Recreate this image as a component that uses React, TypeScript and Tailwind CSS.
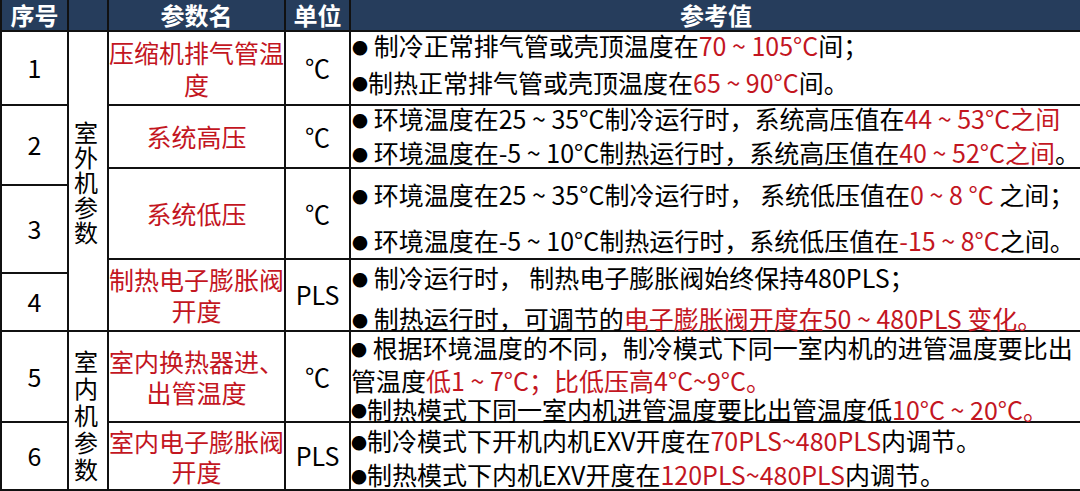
import React from "react";

type Seg = string | { r: string };

const font = { fontFamily: '"Noto Sans CJK SC", "Noto Sans", sans-serif' };

function Line({ parts, bullet, space }: { parts: Seg[]; bullet?: boolean; space?: boolean }) {
  return (
    <div className="whitespace-nowrap">
      {bullet && <span className="text-[16px] align-middle relative -top-[2px]">●</span>}
      {space && " "}
      {parts.map((p, i) =>
        typeof p === "string" ? (
          <span key={i}>{p}</span>
        ) : (
          <span key={i} className="text-[#c3161f]">
            {p.r}
          </span>
        )
      )}
    </div>
  );
}

function Head({ children }: { children?: React.ReactNode }) {
  return (
    <div className="bg-[#263d5c] text-white font-bold text-[24px] flex items-center justify-center leading-[30px]">
      {children}
    </div>
  );
}

function Cell({ children, className = "" }: { children?: React.ReactNode; className?: string }) {
  return <div className={`bg-white flex items-center justify-center ${className}`}>{children}</div>;
}

function Vertical({ text, lh }: { text: string; lh: string }) {
  return (
    <div className={`flex flex-col items-center text-[24px] ${lh}`}>
      {text.split("").map((c, i) => (
        <span key={i}>{c}</span>
      ))}
    </div>
  );
}

export default function App() {
  return (
    <div style={font} className="w-[1080px] h-[491px] bg-[#111] overflow-hidden text-black">
      <div className="grid h-full px-[2px] pb-[2px] gap-[2px] grid-cols-[65px_38px_175px_63px_1fr] grid-rows-[30px_72px_61px_15px_72px_12px_56px_89px_66px] text-[25px]">
        {/* header */}
        <Head>序号</Head>
        <Head />
        <Head>参数名</Head>
        <Head>单位</Head>
        <Head>参考值</Head>

        {/* 序号 column has its own row splits */}
        <Cell className="col-start-1 row-start-2">1</Cell>
        <Cell className="col-start-1 row-start-3 row-span-2">2</Cell>
        <Cell className="col-start-1 row-start-5 row-span-2">3</Cell>
        <Cell className="col-start-1 row-start-7">4</Cell>
        <Cell className="col-start-1 row-start-8">5</Cell>
        <Cell className="col-start-1 row-start-9">6</Cell>

        {/* group column */}
        <Cell className="col-start-2 row-start-2 row-span-6 pr-[4px]">
          <Vertical text="室外机参数" lh="leading-[25px]" />
        </Cell>
        <Cell className="col-start-2 row-start-8 row-span-2 pr-[4px] pt-[8px]">
          <Vertical text="室内机参数" lh="leading-[27px]" />
        </Cell>

        {/* row 1 */}
        <Cell className="col-start-3 row-start-2 text-[#c3161f] text-center leading-[32px]">
          压缩机排气管温度
        </Cell>
        <Cell className="col-start-4 row-start-2">℃</Cell>
        <div className="col-start-5 row-start-2 bg-white flex flex-col leading-[33px] px-[1px]">
          <div className="-mt-[3px]">
            <Line bullet space parts={["制冷正常排气管或壳顶温度在", { r: "70 ~ 105°C" }, "间；"]} />
            <Line bullet parts={["制热正常排气管或壳顶温度在", { r: "65 ~ 90°C" }, "间。"]} />
          </div>
        </div>

        {/* row 2 */}
        <Cell className="col-start-3 row-start-3 text-[#c3161f]">系统高压</Cell>
        <Cell className="col-start-4 row-start-3">℃</Cell>
        <div className="col-start-5 row-start-3 bg-white flex flex-col leading-[30px] px-[1px]">
          <div className="-mt-[3px]">
            <Line bullet space parts={["环境温度在25 ~ 35°C制冷运行时，系统高压值在", { r: "44 ~ 53°C之间" }]} />
            <Line bullet space parts={["环境温度在-5 ~ 10°C制热运行时，系统高压值在", { r: "40 ~ 52°C之间" }, "。"]} />
          </div>
        </div>

        {/* row 3 */}
        <Cell className="col-start-3 row-start-4 row-span-2 text-[#c3161f]">系统低压</Cell>
        <Cell className="col-start-4 row-start-4 row-span-2">℃</Cell>
        <div className="col-start-5 row-start-4 row-span-2 bg-white flex flex-col gap-[12px] pt-[10px] leading-[30px] px-[1px]">
          <Line bullet space parts={["环境温度在25 ~ 35°C制冷运行时， 系统低压值在", { r: "0 ~ 8 °C" }, " 之间；"]} />
          <Line bullet space parts={["环境温度在-5 ~ 10°C制热运行时，系统低压值在", { r: "-15 ~ 8°C" }, "之间。"]} />
        </div>

        {/* row 4 */}
        <Cell className="col-start-3 row-start-6 row-span-2 text-[#c3161f] text-center leading-[31px]">
          制热电子膨胀阀开度
        </Cell>
        <Cell className="col-start-4 row-start-6 row-span-2">PLS</Cell>
        <div className="col-start-5 row-start-6 row-span-2 bg-white flex flex-col gap-[7px] pt-[2px] leading-[30px] px-[1px]">
          <Line bullet space parts={["制冷运行时， 制热电子膨胀阀始终保持480PLS；"]} />
          <Line bullet space parts={["制热运行时，可调节的", { r: "电子膨胀阀开度在50 ~ 480PLS 变化。" }]} />
        </div>

        {/* row 5 */}
        <Cell className="col-start-3 row-start-8 text-[#c3161f] text-center leading-[31px]">
          室内换热器进、出管温度
        </Cell>
        <Cell className="col-start-4 row-start-8">℃</Cell>
        <div className="col-start-5 row-start-8 bg-white flex flex-col pt-[1px] leading-[29px]">
          <Line bullet space parts={["根据环境温度的不同，制冷模式下同一室内机的进管温度要比出"]} />
          <Line parts={["管温度", { r: "低1 ~ 7°C；比低压高4°C~9°C。" }]} />
          <Line bullet parts={["制热模式下同一室内机进管温度要比出管温度低", { r: "10°C ~ 20°C。" }]} />
        </div>

        {/* row 6 */}
        <Cell className="col-start-3 row-start-9 text-[#c3161f] text-center leading-[30px]">
          室内电子膨胀阀开度
        </Cell>
        <Cell className="col-start-4 row-start-9">PLS</Cell>
        <div className="col-start-5 row-start-9 bg-white flex flex-col pt-[2px] leading-[30px]">
          <Line bullet parts={["制冷模式下开机内机EXV开度在", { r: "70PLS~480PLS" }, "内调节。"]} />
          <Line bullet parts={["制热模式下内机EXV开度在", { r: "120PLS~480PLS" }, "内调节。"]} />
        </div>
      </div>
    </div>
  );
}
